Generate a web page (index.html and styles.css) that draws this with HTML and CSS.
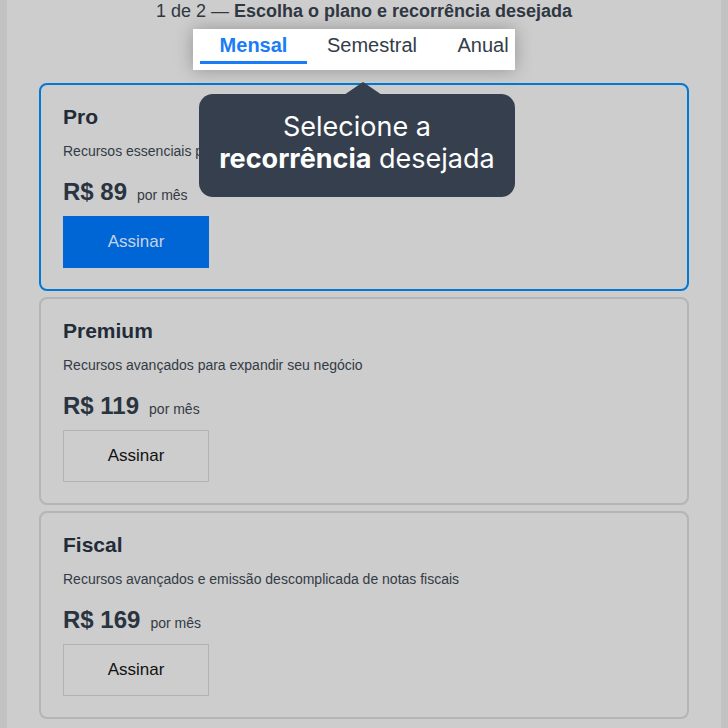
FILE: index.html
```html
<!DOCTYPE html>
<html lang="pt-BR">
<head>
    <meta charset="utf-8">
    <title>Escolha o plano</title>
    <link rel="stylesheet" href="styles.css">
</head>
<body>

<div class="page">
    <p class="step">1 de 2 — <strong>Escolha o plano e recorrência desejada</strong></p>

    <div class="tabs">
        <span class="tab active">Mensal</span>
        <span class="tab">Semestral</span>
        <span class="tab">Anual</span>
    </div>

    <div class="plans">
        <div class="plan selected">
            <h3>Pro</h3>
            <p class="desc">Recursos essenciais para começar seu negócio</p>
            <div class="price"><strong>R$ 89</strong><span>por mês</span></div>
            <button class="btn primary">Assinar</button>
        </div>

        <div class="plan">
            <h3>Premium</h3>
            <p class="desc">Recursos avançados para expandir seu negócio</p>
            <div class="price"><strong>R$ 119</strong><span>por mês</span></div>
            <button class="btn">Assinar</button>
        </div>

        <div class="plan">
            <h3>Fiscal</h3>
            <p class="desc">Recursos avançados e emissão descomplicada de notas fiscais</p>
            <div class="price"><strong>R$ 169</strong><span>por mês</span></div>
            <button class="btn">Assinar</button>
        </div>
    </div>

    <div class="tour-tip">
        Selecione a<br>
        <b>recorrência</b> desejada
    </div>
</div>

</body>
</html>
```

FILE: styles.css
```css
:root {
    --page-bg: #cdcdcd;
    --edge-bg: #c2c2c2;
    --text: #2a3441;
    --blue: #0078d4;
    --tip-bg: #363f4e;
}

html, body {
    margin: 0;
    background: var(--edge-bg);
}

body {
    font-family: "Liberation Sans", Arial, sans-serif;
    color: var(--text);
}

.page {
    position: relative;
    margin: 0 7px;
    min-height: 728px;
    background: var(--page-bg);
    overflow: hidden;
}

.step {
    margin: 0;
    font-size: 18px;
    line-height: 22px;
    text-align: center;
    color: #2f3742;
}

.tabs {
    display: flex;
    width: 315px;
    height: 41px;
    margin: 7px 0 0 186px;
    padding-left: 7px;
    background: #fff;
    overflow: hidden;
    box-shadow: 0 0 18px rgba(0, 0, 0, 0.28);
}

.tab {
    flex: none;
    display: flex;
    align-items: center;
    justify-content: center;
    width: 130px;
    height: 32px;
    font-size: 20px;
    color: #333d49;
}

.tab:first-child {
    width: 107px;
}

.tab:last-child {
    width: 92px;
}

.tab.active {
    color: #1a7cf7;
    font-weight: bold;
    border-bottom: 3px solid #1a7cf7;
}

.plans {
    display: flex;
    flex-direction: column;
    gap: 6px;
    margin: 13px 32px 0;
}

.plan {
    border: 2px solid #b5b5b5;
    border-radius: 8px;
    padding: 20px 22px 21px;
}

.plan.selected {
    border-color: var(--blue);
}

.plan h3 {
    margin: 0;
    font-size: 21px;
    line-height: 24px;
    color: #222c38;
}

.desc {
    margin: 12px 0 0;
    font-size: 14px;
    line-height: 20px;
    color: #333b45;
}

.price {
    display: flex;
    align-items: baseline;
    gap: 10px;
    margin-top: 17px;
    line-height: 28px;
}

.price strong {
    font-size: 24px;
}

.price span {
    font-size: 14px;
    line-height: 1;
    color: #333b45;
}

.btn {
    display: block;
    width: 146px;
    height: 52px;
    margin-top: 10px;
    background: transparent;
    border: 1px solid #b2b2b2;
    font-family: "Liberation Sans", Arial, sans-serif;
    font-size: 17px;
    color: #111;
    cursor: pointer;
}

.btn.primary {
    background: #0066d6;
    border-color: #0066d6;
    color: #c6d3e6;
}

.tour-tip {
    position: absolute;
    left: 192px;
    top: 94px;
    width: 316px;
    height: 103px;
    box-sizing: border-box;
    padding: 17px 0 22px;
    background: var(--tip-bg);
    border-radius: 14px;
    font-family: Inter, "Noto Sans", sans-serif;
    font-size: 27px;
    line-height: 32px;
    text-align: center;
    color: #fff;
}

.tour-tip::before {
    content: "";
    position: absolute;
    left: 145px;
    top: -12px;
    border-left: 19px solid transparent;
    border-right: 19px solid transparent;
    border-bottom: 13px solid var(--tip-bg);
}

.tour-tip b {
    font-weight: 700;
}
```
